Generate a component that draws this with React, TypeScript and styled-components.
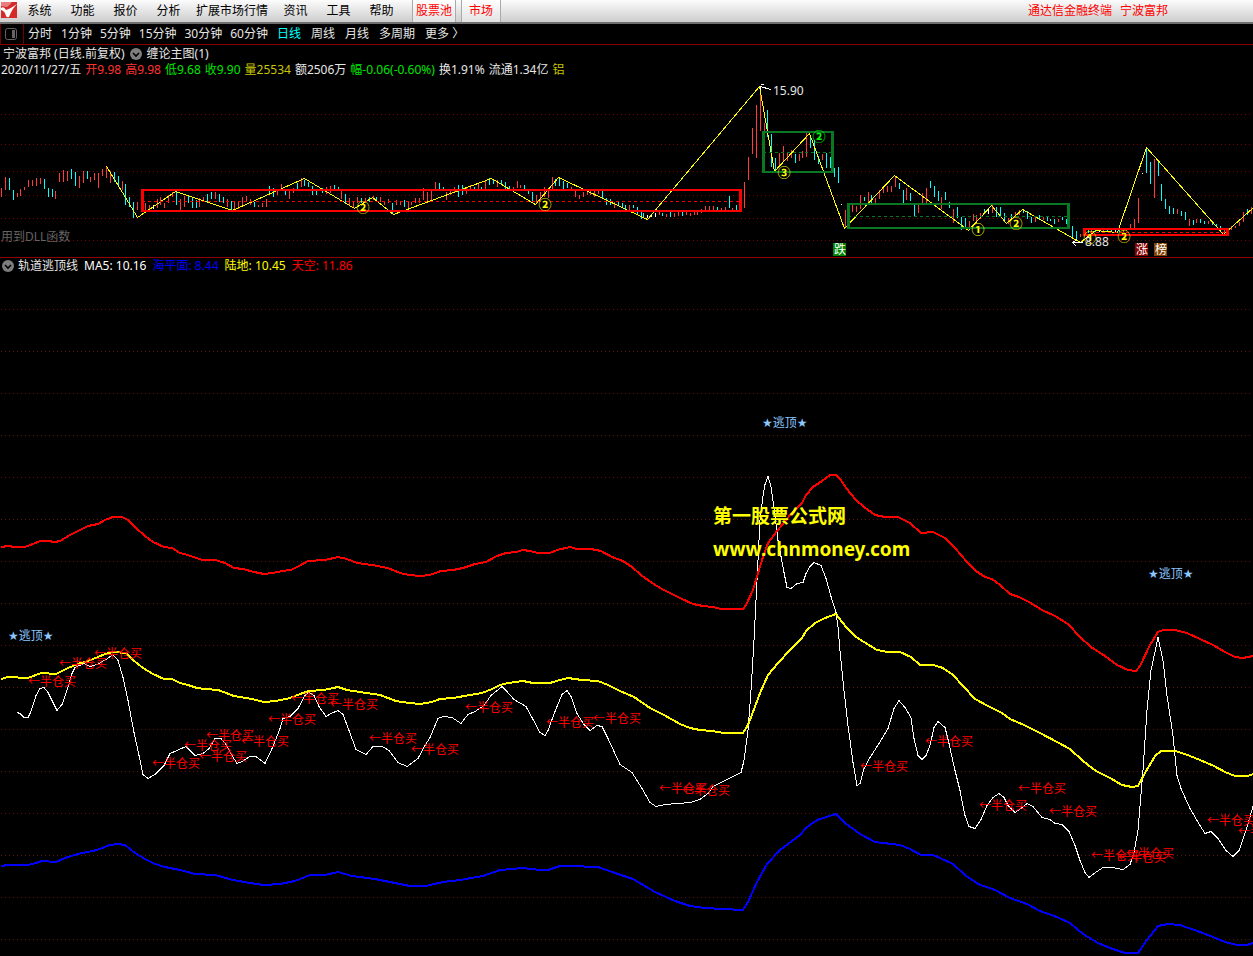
import React from "react";
import styled, { createGlobalStyle } from "styled-components";

const FONT = '"Noto Sans", "Noto Sans CJK SC", sans-serif';

const GlobalStyle = createGlobalStyle`
  body {
    margin: 0;
    background: #000;
    color: #e6e6e6;
    font: 12px/16px ${FONT};
  }
  * { box-sizing: border-box; }
`;

const Page = styled.div`
  display: flex;
  flex-direction: column;
  min-height: 100vh;
  background: #000;
`;

const MenuBar = styled.header`
  display: flex;
  height: 24px;
  border-bottom: 2px solid #6e6e6e;
  background: linear-gradient(#fcfcfc, #cdcdcd);
`;

const Logo = styled.svg`
  flex: none;
  width: 18px;
  height: 20px;
`;

const Menu = styled.nav`
  display: flex;
`;

const MenuButton = styled.button`
  min-width: 43px;
  padding: 0 6px;
  border: 0;
  background: none;
  color: #000;
  font: 12px/22px ${FONT};
  white-space: nowrap;
`;

const Tabs = styled.div`
  display: flex;
  gap: 5px;
  margin-left: 9px;
`;

const Tab = styled.button<{ $pad: number }>`
  padding: 0 ${(p) => p.$pad}px;
  border: solid #aaa;
  border-width: 0 1px;
  background: linear-gradient(#fff, #e2e2e2);
  color: #f00;
  font: 12px/22px ${FONT};
  white-space: nowrap;
`;

const AppTitle = styled.div`
  display: flex;
  gap: 8px;
  margin-left: auto;
  padding-right: 85px;
  color: #f00;
  line-height: 22px;
  white-space: nowrap;
`;

const PeriodBar = styled.nav`
  display: flex;
  height: 21px;
  border-bottom: 1px solid #8c0000;
`;

const PanelToggle = styled.button`
  display: flex;
  align-items: center;
  width: 24px;
  margin-right: 3px;
  padding: 0 0 0 4px;
  border: solid #700000;
  border-width: 0 1px;
  background: none;
`;

const Periods = styled.div`
  display: flex;
  gap: 8px;
`;

const Period = styled.button<{ $named?: boolean; $active?: boolean }>`
  padding: 0 ${(p) => (p.$named ? 1 : 0)}px;
  border: 0;
  background: none;
  color: ${(p) => (p.$active ? "#00ffff" : "#e6e6e6")};
  font: 12px/20px ${FONT};
  white-space: nowrap;
`;

const Panel = styled.section<{ $divided?: boolean }>`
  display: flex;
  flex-direction: column;
  border-top: ${(p) => (p.$divided ? "1px solid #8c0000" : "0")};
  padding-top: ${(p) => (p.$divided ? 0 : 1)}px;
`;

const InfoRow = styled.div<{ $gap: number; $left: number }>`
  display: flex;
  align-items: center;
  gap: ${(p) => p.$gap}px;
  height: 16px;
  padding-left: ${(p) => p.$left}px;
  white-space: nowrap;
`;

const Value = styled.span<{ $color?: string }>`
  color: ${(p) => p.$color || "#e6e6e6"};
`;

const RoundButton = styled.button`
  display: flex;
  width: 12px;
  height: 12px;
  padding: 0;
  border: 0;
  background: none;
`;

const Chart = styled.svg<{ $height: number }>`
  display: block;
  width: 100%;
  height: ${(p) => p.$height}px;
  overflow: hidden;
  font: 12px ${FONT};
`;

const BigText = styled.text`
  fill: #ffff00;
  font-size: 19px;
  font-weight: 700;
`;

const TopText = styled.text`
  fill: #8cc8ff;
  font-family: "DejaVu Sans", "Noto Sans CJK SC", sans-serif;
`;

const SignalText = styled.text`
  fill: #ff0000;
  font-family: "Noto Sans CJK SC", sans-serif;
`;

const CircledText = styled.text`
  font-family: "Noto Sans CJK SC", sans-serif;
  font-size: 13px;
  font-weight: 700;
  text-anchor: middle;
`;

const TagText = styled.text`
  fill: #ffffff;
  text-anchor: middle;
`;

const menus = ["系统", "功能", "报价", "分析", "扩展市场行情", "资讯", "工具", "帮助"];
const periods = ["分时", "1分钟", "5分钟", "15分钟", "30分钟", "60分钟", "日线", "周线", "月线", "多周期", "更多"];

const quote: [string, string?][] = [
  ["2020/11/27/五"],
  ["开9.98", "#ff3232"],
  ["高9.98", "#ff3232"],
  ["低9.68", "#00e600"],
  ["收9.90", "#00e600"],
  ["量25534", "#c8c800"],
  ["额2506万"],
  ["幅-0.06(-0.60%)", "#00e600"],
  ["换1.91%"],
  ["流通1.34亿"],
  ["铝", "#c8c800"],
];

const indicators: [string, string?][] = [
  ["轨道逃顶线"],
  ["MA5: 10.16", "#ffffff"],
  ["海平面: 8.44", "#0000ff"],
  ["陆地: 10.45", "#ffff00"],
  ["天空: 11.86", "#ff0000"],
];

/* Each bar is a colour letter followed by its high and low ordinates. */
const PITCH = 3.89;
const barRuns: [number, string][] = [
  [1, "r188-197 r177-190 c178-190 c190-200 r193-197 r189-196 r187-190 r180-187 r180-186 r178-186 r178-184 c179-189 c188-197 c189-197 r191-199 r173-182 r170-182 r171-181 c169-179 c172-186 r176-188 r171-183 c171-179 r177-182 r173-180 r173-188 r169-176 r166-178 r171-183 c172-182 c176-186 r181-190 c184-205 c197-207 c202-218 r202-210 r200-212 r203-211 r205-212 w205-209 r199-208 r197-205 r203-208 r195-203 r192-197 c191-205 r199-210 r196-207 c195-203 c197-208 c200-208 r198-207 r197-200 c194-203 c192-199 r192-199 c194-202 c197-203 r199-207 c201-210 r202-210 r201-209 r197-205 r196-201 r199-205 c202-207 r205-207 r203-207 r199-207 c186-195 c188-197 r190-195 r184-190 c189-195 r189-199 r188-193 c183-190 r178-187 c180-186 c182-187 c186-195 c190-195"],
  [322, "c188-193 r187-194 r186-193 c185-190 c187-191 r189-199 c194-203 r198-205 r201-208 r197-203 c198-203 r198-203 c197-202 r196-200 c197-200 r197-202 r201-205 r199-203 c203-214 r200-205 r201-205 c200-207 r202-208 r202-205 r198-203 r198-203 r188-200 r192-201 r190-200 r182-190 c183-189 c187-191 r192-200 r191-195 r187-193 c185-197 c185-195 r187-194 r185-190 c187-190 r184-189 c187-189 r180-189 c178-185 c179-184 r180-187 c180-185 c182-189 c186-190 r187-192 r181-188 r185-188 c185-190 c189-194 c192-202 r195-203 r192-200 r187-197 r190-198 r177-189 c179-186 c179-186 c181-189 c183-188 r187-190 r190-197 r195-199 r192-197 r189-195 r191-195 r191-197 r191-194 c191-198 c198-205 c199-205 r202-208 c202-205 c203-207 c205-209 r205-210 c205-208 c207-215 c212-219"],
  [643, "c213-217 w215-218 w214-217 w213-217 r212-215 c213-216 r214-217 c212-217 r213-217 r212-216 c212-216 r212-215 r213-216 r212-215 r211-215 r209-213 r206-210 r206-210 r206-211 c207-210 r208-210 r207-210 c196-208 r208-210 c205-210 r202-208 r182-208 r157-180 r128-154 r105-158 r87-131 r123-132 c110-137 c134-167 c158-171 r153-167 r146-162 r153-161 r150-158 c154-163 r154-161 r151-158 r133-157 c136-148 c140-160 c156-164 r154-160 c153-168 c157-168 c168-177 c167-183 w204-205 r210-228"],
  [852, "r205-212 r206-212 r195-209 c197-201 r192-202 c195-203 r198-203 r190-199 r187-193 r186-192 r186-192 r176-187 c183-189 c190-203 r188-200 c193-201 c205-216 r204-213 r193-203 r188-203 c181-188 c186-197 c191-201 r197-209 c192-200 c202-208 r209-223 c207-218 c217-230 c218-228 r221-230 r214-221 r215-222 r213-219 c209-214 w209-214 r205-213 c207-217 c207-217 c213-222 r218-224 c214-218 r212-217 r210-215 c209-213 c211-219 c217-223 r216-222 c215-220 r217-220 c217-221 c219-221 c219-224 r219-222 c217-220 c219-224"],
  [1072, "c226-238 c231-239 r234-237 r231-234 c230-233 r230-232 c230-232 w230-232 r230-232 c230-232 c230-232 w230-233 c229-232 r229-232 r228-231 r224-230 r219-229 r198-223 w173-174 c148-173 c162-184 r159-198 c161-176 c184-201 c199-209 c206-214 c208-214 r209-214 c211-216 c212-220 r219-226 c220-225 r219-223 c219-223 c221-224 r221-224 c221-225 c224-227 c226-229 r228-232 r229-233 r226-230 r226-228 r222-226 r212-222 c209-215 r207-214"],
];
const barColors: Record<string, string> = { r: "#ff3c3c", c: "#00ffff", w: "#ffffff" };

const bars = barRuns.flatMap(([start, run]) =>
  run.split(" ").map((bar, i) => {
    const [high, low] = bar.slice(1).split("-").map(Number);
    return { x: Math.round(start + i * PITCH), high, low, color: barColors[bar[0]] };
  })
);

const zigzag =
  "106,166 122,192 137,217 175,191 232,210 304,178 354,208 372,197 393,214 491,178 535,204 558,177 647,219 759,86 774,171 809,133 844,228 894,175 968,230 991,205 1006,223 1022,209 1080,242 1095,230 1117,232 1146,147 1223,234 1253,207";

const zones = [
  { left: 142, right: 742, top: 190, bottom: 211, mid: 201, color: "#ff0000" },
  { left: 763, right: 834, top: 132, bottom: 172, mid: 152, color: "#0a7823" },
  { left: 848, right: 1070, top: 204, bottom: 228, mid: 216, color: "#0a7823" },
  { left: 1084, right: 1229, top: 229, bottom: 235, mid: 232, color: "#ff0000" },
];

const circled: [number, number, string, string][] = [
  [363, 207, "②", "#ffff00"],
  [545, 204, "②", "#ffff00"],
  [819, 136, "②", "#00ff00"],
  [784, 172, "③", "#ffff00"],
  [978, 229, "①", "#ffff00"],
  [1016, 223, "②", "#ffff00"],
  [1090, 237, "①", "#ffff00"],
  [1124, 236, "②", "#ffff00"],
];

const tags: [number, string, string][] = [
  [833, "跌", "#008200"],
  [1135, "涨", "#820000"],
  [1154, "榜", "#824100"],
];

const sky =
  "1,547 8,546 15,547 25,547 33,544 40,541 48,541 55,542 60,541 70,535 80,530 88,526 98,524 105,520 113,517 122,517 128,520 136,528 145,536 153,542 164,547 172,548 180,553 188,555 193,557 203,560 215,560 225,563 234,568 243,569 254,572 264,574 273,573 282,571 291,570 299,566 308,561 325,560 338,557 347,559 357,563 372,565 388,568 400,573 409,575 420,576 430,575 441,571 453,570 463,568 475,564 486,562 497,556 506,553 516,552 523,550 530,551 538,553 550,553 557,550 570,547 577,549 591,549 601,551 612,557 623,561 632,567 641,575 652,583 662,589 672,594 682,599 693,604 703,606 713,607 721,609 743,609 746,605 753,590 759,570 763,557 768,543 774,535 782,525 790,515 802,503 806,495 813,487 822,481 830,475 836,475 841,480 846,488 856,500 864,507 875,515 885,517 898,517 910,523 921,533 933,532 945,538 955,548 967,562 976,571 985,577 992,579 1000,585 1010,594 1019,597 1029,602 1042,610 1055,616 1068,624 1080,637 1091,647 1105,656 1117,665 1128,670 1136,671 1140,666 1150,645 1158,632 1163,630 1175,630 1187,633 1200,639 1213,645 1225,652 1235,657 1243,658 1253,656";
const land =
  "1,679 8,677 28,678 36,675 41,673 56,674 68,668 78,664 88,661 98,657 105,654 113,652 126,653 133,660 143,668 153,674 164,679 172,679 180,683 188,685 197,688 205,689 218,690 226,693 234,696 252,699 264,702 276,701 290,698 300,694 309,691 324,690 338,687 347,690 360,692 380,695 396,701 409,703 420,704 432,702 440,699 453,698 470,695 482,693 492,689 500,685 508,683 523,681 533,683 550,683 560,680 568,678 582,680 598,681 608,685 620,691 634,697 650,708 664,715 680,724 690,728 700,730 712,731 724,733 743,733 748,725 753,712 760,693 768,675 778,663 790,650 802,638 806,631 815,623 825,618 836,614 846,627 856,637 864,642 877,650 888,652 900,652 911,657 920,665 933,665 943,668 953,675 963,686 975,699 988,706 1002,713 1010,719 1024,725 1040,733 1057,742 1070,749 1083,761 1096,771 1110,778 1122,785 1132,787 1138,786 1145,773 1155,756 1161,751 1175,751 1185,754 1200,760 1214,766 1225,772 1235,776 1248,776 1253,774";
const sea =
  "1,866 8,865 28,865 36,863 42,861 56,862 65,858 78,854 97,850 110,845 118,844 125,845 135,853 145,859 155,864 165,867 180,870 195,874 215,875 233,880 250,883 264,885 280,884 295,881 310,875 325,875 338,872 352,876 375,879 395,883 410,886 426,886 443,882 460,880 483,876 500,870 523,868 540,870 548,870 560,866 570,866 598,867 615,873 633,879 655,892 675,901 690,906 705,908 722,909 743,910 748,902 757,882 767,864 780,850 800,835 806,828 817,820 836,814 845,823 860,834 875,842 900,845 910,849 921,855 933,855 940,858 953,864 965,875 978,884 995,890 1010,898 1027,904 1040,911 1057,917 1070,923 1083,934 1098,943 1110,948 1125,953 1138,953 1147,940 1158,926 1168,924 1180,925 1200,932 1213,937 1225,942 1237,945 1247,945 1253,943";
const average =
  "17,712 20,713 24,717 28,717 31,711 36,695 40,688 44,687 48,692 53,702 57,710 62,704 67,690 72,673 75,667 84,663 90,666 97,664 106,659 113,654 118,660 123,677 128,700 134,732 139,755 143,774 148,778 155,774 164,765 170,753 177,750 186,746 195,755 203,753 209,748 215,738 221,738 226,744 232,755 237,763 242,761 250,756 256,756 265,763 273,746 280,728 283,718 290,716 298,708 305,695 309,692 314,695 319,706 326,716 331,713 338,710 343,714 349,730 356,749 366,754 373,746 382,746 389,750 398,762 407,766 418,758 425,745 430,737 438,718 443,716 452,717 461,723 468,714 475,711 484,705 491,695 502,686 506,690 514,699 526,706 532,717 540,732 545,735 548,730 555,711 562,694 567,690 571,696 577,713 584,724 590,730 597,725 602,726 608,738 620,764 632,772 642,788 650,802 656,806 665,804 690,802 700,799 708,793 713,786 725,780 741,772 744,760 748,730 751,690 754,640 757,580 760,520 763,496 765,484 768,476 771,486 775,515 778,540 784,572 787,587 791,588 797,583 803,582 806,573 810,566 814,562 821,565 826,578 831,596 836,612 838,626 840,650 844,690 848,725 853,762 857,785 860,783 864,768 870,757 879,743 888,728 894,708 899,700 905,707 911,717 914,738 918,755 922,759 926,755 930,745 934,727 938,721 945,727 949,743 955,770 960,790 965,815 969,826 975,828 981,819 987,805 993,797 999,793 1004,797 1008,805 1015,812 1021,808 1027,803 1033,806 1042,817 1050,819 1055,823 1062,824 1069,831 1075,845 1080,860 1085,872 1089,877 1094,873 1103,867 1112,867 1123,869 1130,864 1134,852 1138,830 1143,770 1147,710 1151,670 1158,637 1163,660 1167,695 1173,735 1177,775 1181,788 1190,808 1200,825 1205,833 1211,831 1218,838 1226,850 1233,856 1239,850 1246,830 1253,806";

const buySignals = [
  [28, 681], [59, 663], [94, 653], [152, 763], [184, 745], [206, 735], [199, 756],
  [241, 741], [268, 719], [291, 698], [330, 704], [369, 738], [411, 749], [465, 707],
  [546, 722], [593, 718], [659, 788], [682, 790], [860, 766], [925, 741], [979, 805],
  [1018, 788], [1049, 811], [1091, 855], [1118, 857], [1126, 853], [1207, 820], [1238, 831],
];
const topSignals = [[8, 635], [762, 422], [1148, 573]];

const Grid = ({ rows, color }: { rows: number[]; color: string }) => (
  <g stroke={color} strokeDasharray="1 3" shapeRendering="crispEdges">
    {rows.map((y) => (
      <line key={y} x1="1" x2="100%" y1={y + 0.5} y2={y + 0.5} />
    ))}
  </g>
);

const Collapse = ({ label }: { label: string }) => (
  <RoundButton aria-label={label}>
    <svg width="12" height="12" viewBox="0 0 12 12">
      <circle cx="6" cy="6" r="6" fill="#7d7d7d" />
      <path d="M3 5l3 3 3-3" fill="none" stroke="#000" strokeWidth="1.6" />
    </svg>
  </RoundButton>
);

const PriceChart = () => (
  <Chart $height={179} role="img" aria-label="缠论主图">
    <g transform="translate(0 -78)">
      <Grid rows={[114, 144, 171, 195, 218, 240]} color="#780000" />
      <g shapeRendering="crispEdges">
        {bars.map((b, i) => (
          <rect key={i} x={b.x} y={b.high} width="1" height={b.low - b.high} fill={b.color} />
        ))}
        <polyline points={zigzag} transform="translate(.5 .5)" fill="none" stroke="#ffff00" />
        {zones.map((z) => (
          <g key={z.left} stroke={z.color} fill="none">
            <path d={`M${z.left} ${z.top}H${z.right}M${z.left} ${z.bottom}H${z.right}`} strokeWidth="2" />
            <path d={`M${z.left + 0.5} ${z.top - 1}V${z.bottom + 1}M${z.right - 1.5} ${z.top - 1}V${z.bottom + 1}`} strokeWidth="3" />
            <path d={`M${z.left} ${z.mid + 0.5}H${z.right}`} strokeDasharray="3 3" />
          </g>
        ))}
        <path d="M771 89.500L760 86.500M764 84.500H761M760 87V90" stroke="#fff" fill="none" />
        <path d="M1083 242.500H1073M1077 239L1073 242.500L1076 246" stroke="#fff" fill="none" />
      </g>
      {circled.map(([x, y, mark, color]) => (
        <CircledText key={x} x={x} y={y + 5} fill={color}>{mark}</CircledText>
      ))}
      <text x="773" y="95" fill="#e6e6e6">15.90</text>
      <text x="1085" y="246" fill="#e6e6e6">8.88</text>
      <text x="1" y="241" fill="#646464">用到DLL函数</text>
      {tags.map(([x, label, color]) => (
        <g key={label}>
          <rect x={x} y="243" width="13" height="13" fill={color} />
          <TagText x={x + 7} y="254">{label}</TagText>
        </g>
      ))}
    </g>
  </Chart>
);

const TrackChart = () => (
  <Chart $height={682} role="img" aria-label="轨道逃顶线">
    <g transform="translate(0 -274)">
      <Grid rows={Array.from({ length: 16 }, (_, i) => 309 + i * 42)} color="#5f0f0f" />
      <g fill="none" shapeRendering="crispEdges">
        <polyline points={average} transform="translate(0 .5)" stroke="#ffffff" />
        <polyline points={sea} stroke="#0000ff" strokeWidth="2" />
        <polyline points={land} stroke="#ffff00" strokeWidth="2" />
        <polyline points={sky} stroke="#ff0000" strokeWidth="2" />
      </g>
      {buySignals.map(([x, y]) => (
        <SignalText key={x} x={x} y={y + 5}>←半仓买</SignalText>
      ))}
      {topSignals.map(([x, y]) => (
        <TopText key={x} x={x} y={y + 5}>★逃顶★</TopText>
      ))}
      <BigText x="713" y="523">第一股票公式网</BigText>
      <BigText x="713" y="556">www.chnmoney.com</BigText>
    </g>
  </Chart>
);

export default function App() {
  return (
    <Page>
      <GlobalStyle />
      <MenuBar>
        <Logo viewBox="0 0 18 20">
          <rect x="1" y="2" width="16" height="16" fill="#d42a2a" />
          <path d="M1 2H12Q9 6 7 7L1 6Z" fill="#e88080" />
          <path d="M1 8Q4 6 6 10Q10 9 17 4Q12 9 9 17Q7 18 6 16Q5 11 1 10Z" fill="#fff" />
        </Logo>
        <Menu>
          {menus.map((m) => (
            <MenuButton key={m}>{m}</MenuButton>
          ))}
        </Menu>
        <Tabs>
          <Tab $pad={3}>股票池</Tab>
          <Tab $pad={7}>市场</Tab>
        </Tabs>
        <AppTitle>
          <span>通达信金融终端</span>
          <span>宁波富邦</span>
        </AppTitle>
      </MenuBar>
      <PeriodBar>
        <PanelToggle aria-label="侧栏">
          <svg width="12" height="12" viewBox="0 0 12 12">
            <rect x=".5" y=".5" width="11" height="11" rx="2" fill="none" stroke="#646464" />
            <rect x="7" y="2" width="3" height="8" fill="#646464" />
          </svg>
        </PanelToggle>
        <Periods>
          {periods.map((p) => (
            <Period key={p} $named={!/\d/.test(p)} $active={p === "日线"}>
              {p === "更多" ? "更多 〉" : p}
            </Period>
          ))}
        </Periods>
      </PeriodBar>
      <Panel>
        <InfoRow $gap={5} $left={3}>
          <span>宁波富邦 (日线.前复权)</span>
          <Collapse label="主图设置" />
          <span>缠论主图(1)</span>
        </InfoRow>
        <InfoRow $gap={4} $left={1}>
          {quote.map(([text, color]) => (
            <Value key={text} $color={color}>{text}</Value>
          ))}
        </InfoRow>
        <PriceChart />
      </Panel>
      <Panel $divided>
        <InfoRow $gap={4} $left={2}>
          <Collapse label="副图设置" />
          <InfoRow $gap={6} $left={0}>
            {indicators.map(([text, color]) => (
              <Value key={text} $color={color}>{text}</Value>
            ))}
          </InfoRow>
        </InfoRow>
        <TrackChart />
      </Panel>
    </Page>
  );
}
